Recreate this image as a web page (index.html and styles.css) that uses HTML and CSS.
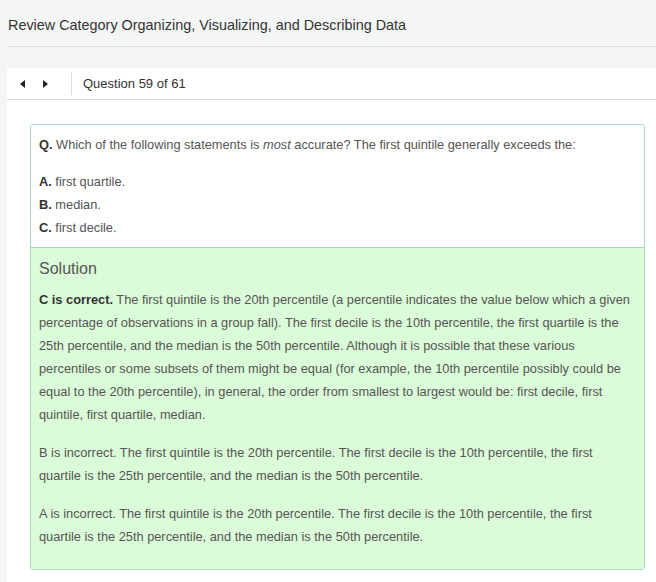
FILE: index.html
```html
<!DOCTYPE html>
<html>
<head>
<meta charset="utf-8">
<link rel="stylesheet" href="styles.css">
</head>
<body>
<div class="page">
  <header class="header">
    <h1 class="title">Review Category Organizing, Visualizing, and Describing Data</h1>
  </header>
  <main class="main">
    <nav class="nav">
      <span class="arrow arrow-left"></span>
      <span class="arrow arrow-right"></span>
      <span class="sep"></span>
      <span class="qnum">Question 59 of 61</span>
    </nav>
    <section class="card">
      <div class="question">
        <p class="stem"><b>Q.</b> Which of the following statements is <i>most</i> accurate? The first quintile generally exceeds the:</p>
        <ul class="choices">
          <li><b>A.</b> first quartile.</li>
          <li><b>B.</b> median.</li>
          <li><b>C.</b> first decile.</li>
        </ul>
      </div>
      <div class="solution">
        <h2 class="sol-title">Solution</h2>
        <p><b>C is correct.</b> The first quintile is the 20th percentile (a percentile indicates the value below which a given percentage of observations in a group fall). The first decile is the 10th percentile, the first quartile is the 25th percentile, and the median is the 50th percentile. Although it is possible that these various percentiles or some subsets of them might be equal (for example, the 10th percentile possibly could be equal to the 20th percentile), in general, the order from smallest to largest would be: first decile, first quintile, first quartile, median.</p>
        <p>B is incorrect. The first quintile is the 20th percentile. The first decile is the 10th percentile, the first quartile is the 25th percentile, and the median is the 50th percentile.</p>
        <p>A is incorrect. The first quintile is the 20th percentile. The first decile is the 10th percentile, the first quartile is the 25th percentile, and the median is the 50th percentile.</p>
      </div>
    </section>
  </main>
</div>
</body>
</html>
```
FILE: styles.css
```css
html, body {
  margin: 0;
  padding: 0;
  background: #f4f6f6;
  font-family: "Liberation Sans", Arial, sans-serif;
  color: #555;
}
.page {
  padding-left: 7px;
  height: 582px;
  overflow: hidden;
}
.header {
  height: 47px;
  border-bottom: 1px solid #d8dcdc;
  box-sizing: border-box;
  margin-bottom: 21px;
}
.title {
  margin: 0;
  padding: 16px 0 0 1px;
  font-size: 14.4px;
  font-weight: normal;
  line-height: 18px;
  color: #333;
}
.main {
  background: #fff;
  min-height: 520px;
  overflow: hidden;
}
.nav {
  display: flex;
  align-items: center;
  height: 31px;
  border-bottom: 1px solid #dcdcdc;
}
.arrow {
  width: 0;
  height: 0;
  border-top: 4px solid transparent;
  border-bottom: 4px solid transparent;
}
.arrow-left {
  margin-left: 13px;
  border-right: 5px solid #222;
}
.arrow-right {
  margin-left: 18px;
  border-left: 5px solid #222;
}
.sep {
  width: 1px;
  height: 23px;
  background: #dcdcdc;
  margin-left: 23px;
}
.qnum {
  margin-left: 11px;
  font-size: 13px;
  color: #333;
}
.card {
  margin: 24px 0 0 23px;
  width: 615px;
  box-sizing: border-box;
  border: 1px solid #a6d9c6;
  border-radius: 3px;
  overflow: hidden;
}
.question {
  background: #fff;
  padding: 8px 8px 8px 8px;
  border-bottom: 1px solid #a6d9c0;
}
.stem {
  margin: 0 0 14px;
  font-size: 12.8px;
  line-height: 23px;
}
.stem b, .choices b, .solution b {
  color: #333;
}
.choices {
  list-style: none;
  margin: 0;
  padding: 0;
  font-size: 12.8px;
  line-height: 23px;
}
.solution {
  background: #dbfcd8;
  padding: 10px 8px 6px 8px;
}
.sol-title {
  margin: 0 0 8px;
  font-size: 16px;
  font-weight: normal;
  line-height: 22px;
  color: #555;
}
.solution p {
  margin: 0 0 15px;
  font-size: 12.8px;
  line-height: 23px;
}
```
